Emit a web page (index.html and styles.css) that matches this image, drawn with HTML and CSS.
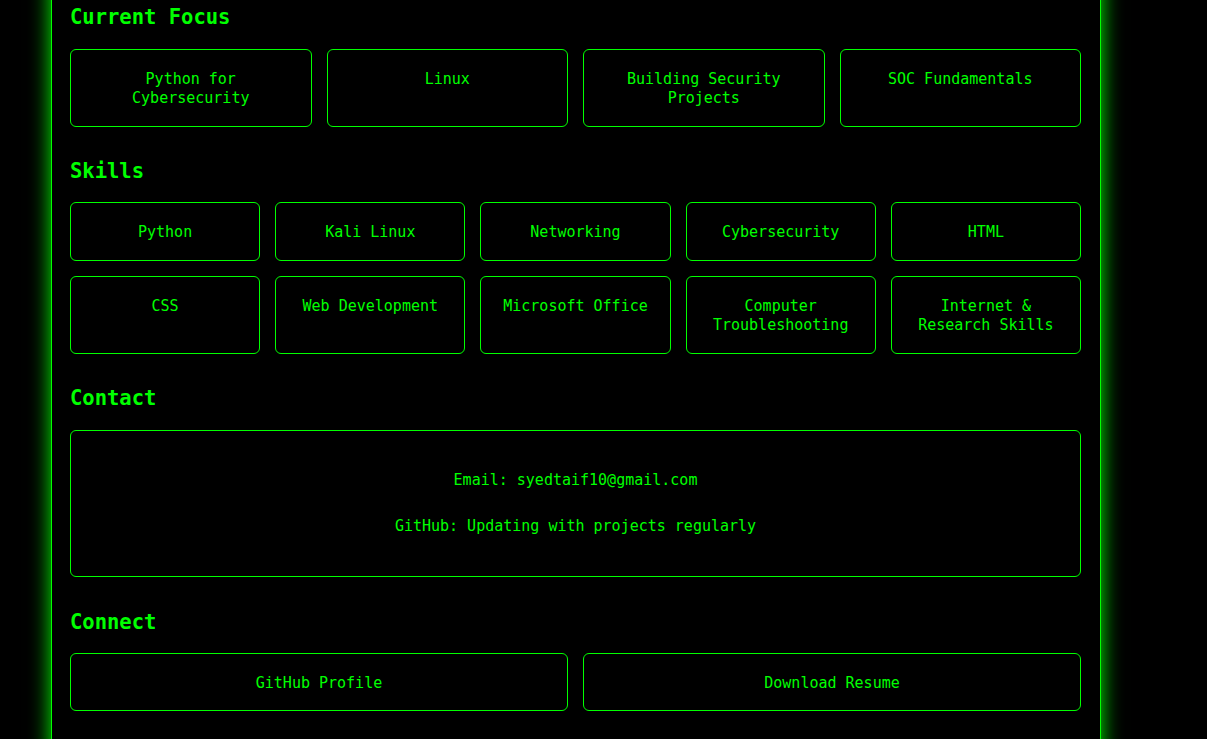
FILE: index.html
```html
<!DOCTYPE html>
<html lang="en">
<head>
<meta charset="utf-8">
<title>Syed Taif — Portfolio</title>
<link rel="stylesheet" href="styles.css">
</head>
<body>
  <main class="terminal">
    <section class="block">
      <h2 class="block-title">Current Focus</h2>
      <div class="grid grid-4">
        <div class="tile">Python for<br>Cybersecurity</div>
        <div class="tile">Linux</div>
        <div class="tile">Building Security<br>Projects</div>
        <div class="tile">SOC Fundamentals</div>
      </div>
    </section>

    <section class="block">
      <h2 class="block-title">Skills</h2>
      <div class="grid grid-5">
        <div class="tile">Python</div>
        <div class="tile">Kali Linux</div>
        <div class="tile">Networking</div>
        <div class="tile">Cybersecurity</div>
        <div class="tile">HTML</div>
        <div class="tile">CSS</div>
        <div class="tile">Web Development</div>
        <div class="tile">Microsoft Office</div>
        <div class="tile">Computer<br>Troubleshooting</div>
        <div class="tile">Internet &amp;<br>Research Skills</div>
      </div>
    </section>

    <section class="block">
      <h2 class="block-title">Contact</h2>
      <div class="contact">
        <p>Email: syedtaif10@gmail.com</p>
        <p>GitHub: Updating with projects regularly</p>
      </div>
    </section>

    <section class="block block-connect">
      <h2 class="block-title">Connect</h2>
      <div class="grid grid-2">
        <a class="tile link" href="#">GitHub Profile</a>
        <a class="tile link" href="#">Download Resume</a>
      </div>
    </section>
  </main>
</body>
</html>
```
FILE: styles.css
```css
html, body {
  margin: 0;
  background: #000;
}

body {
  color: #00ff00;
  font-family: "DejaVu Sans Mono", "Liberation Mono", monospace;
  font-size: 15px;
  line-height: 19px;
  overflow: hidden;
}

/* glowing terminal panel */
.terminal {
  box-sizing: border-box;
  width: 1050px;
  margin: -41px 0 0 51px;
  padding: 45px 19px 40px 18px;
  min-height: 900px;
  background: #000;
  border: 1px solid #00ff00;
  box-shadow: 0 0 20px #00ff00;
}

.block + .block {
  margin-top: 32px;
}

.block + .block-connect {
  margin-top: 33px;
}

.block-title {
  margin: 0 0 19.5px 0;
  font-size: 20.5px;
  line-height: 24px;
  font-weight: bold;
  color: #00ff00;
}

.grid {
  display: grid;
  gap: 15px;
}

.grid-4 { grid-template-columns: repeat(4, 1fr); }
.grid-5 { grid-template-columns: repeat(5, 1fr); }
.grid-2 { grid-template-columns: repeat(2, 1fr); }

.tile {
  border: 1px solid #00ff00;
  border-radius: 6px;
  padding: 20px 10px 18px;
  text-align: center;
  color: #00ff00;
}

.link {
  display: block;
  text-decoration: none;
  padding: 20px 10px 17px;
}

.contact {
  border: 1px solid #00ff00;
  border-radius: 6px;
  padding: 40px 20px 40px;
  text-align: center;
}

.contact p {
  margin: 0;
}

.contact p + p {
  margin-top: 27px;
}
```
